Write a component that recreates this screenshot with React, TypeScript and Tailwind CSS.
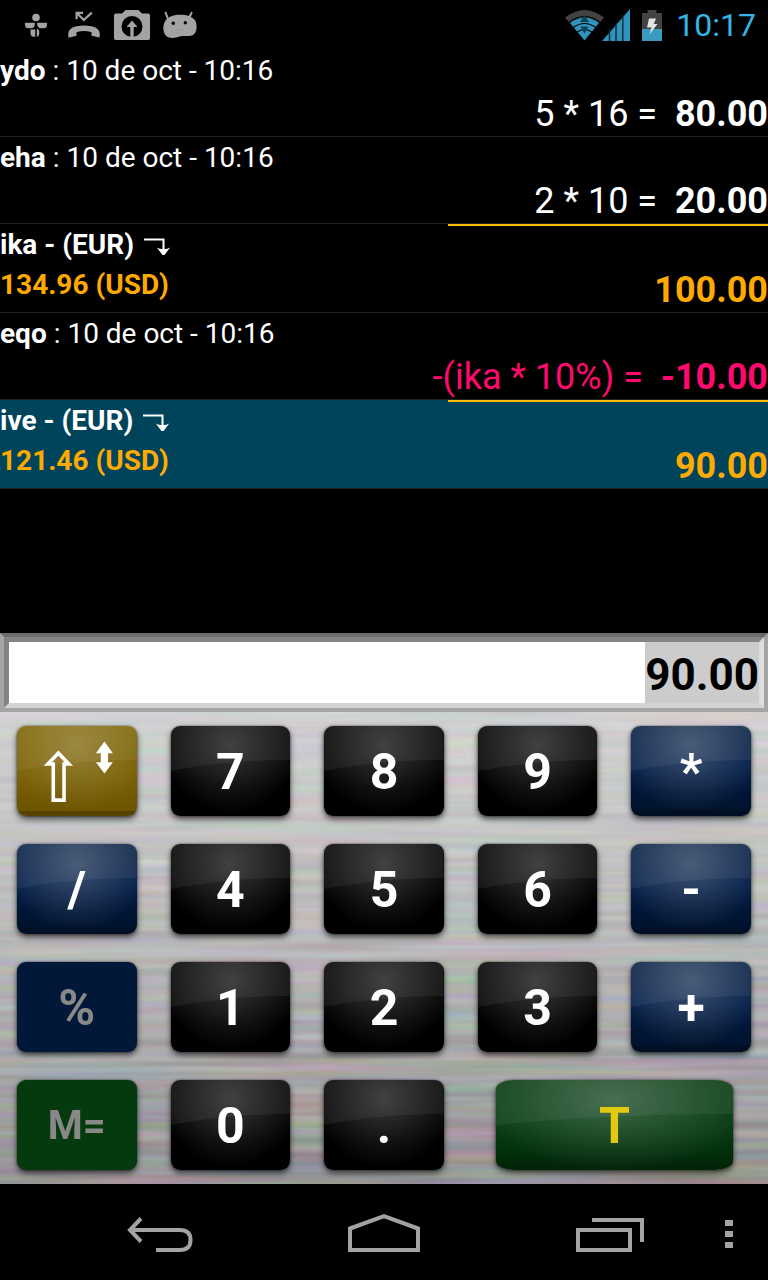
import { ReactNode } from 'react';
import clsx from 'clsx';

type Entry = {
  name: string;
  detail: string;
  expression: string;
  amount: string;
  negative?: boolean;
};

type Total = {
  name: string;
  currency: string;
  converted: string;
  amount: string;
  selected?: boolean;
};

type Tone = 'black' | 'blue' | 'gold' | 'green' | 'blueOff' | 'greenOff';

type KeyDef = {
  label: string;
  tone: Tone;
  text?: string;
  icon?: ReactNode;
  wide?: boolean;
};

const tones: Record<Tone, string> = {
  black:
    'bg-[radial-gradient(ellipse_58%_75%_at_50%_22%,rgba(255,255,255,0.19),transparent),linear-gradient(#080808,#050505_45%,#000_65%)]',
  blue:
    'bg-[radial-gradient(ellipse_60%_75%_at_50%_22%,rgba(255,255,255,0.22),transparent),linear-gradient(#0a2346,#06204a_45%,#001536_75%,#001430_90%,#000f24_95%)]',
  gold:
    'bg-[radial-gradient(ellipse_60%_75%_at_50%_22%,rgba(255,255,255,0.18),transparent),linear-gradient(#806809,#7a6106_55%,#6c5400_94%,#564300_95%)]',
  green:
    'bg-[radial-gradient(ellipse_58%_80%_at_50%_22%,rgba(255,255,255,0.21),transparent),linear-gradient(#093d14,#073c13_50%,#02300c_80%,#022508_95%)]',
  blueOff: 'bg-[#021838]',
  greenOff: 'bg-[#043a0e]',
};

const shiftIcon = (
  <svg viewBox="0 0 120 90" className="relative h-full w-full" aria-hidden="true">
    <path d="M41.5 27 52 38H47.2V74.2H36.4V38H31z" fill="none" stroke="#fff" strokeWidth="3.6" />
    <path d="M87.7 15.5 96.2 27.2H91.3V36.2H96.2L87.7 47.5 79.2 36.2H84.1V27.2H79.2z" fill="#fff" />
  </svg>
);

const keys: KeyDef[] = [
  { label: 'Shift', tone: 'gold', icon: shiftIcon },
  { label: '7', tone: 'black' },
  { label: '8', tone: 'black' },
  { label: '9', tone: 'black' },
  { label: '*', tone: 'blue' },
  { label: '/', tone: 'blue' },
  { label: '4', tone: 'black' },
  { label: '5', tone: 'black' },
  { label: '6', tone: 'black' },
  { label: '-', tone: 'blue' },
  { label: '%', tone: 'blueOff', text: 'text-[50px] text-[#888]' },
  { label: '1', tone: 'black' },
  { label: '2', tone: 'black' },
  { label: '3', tone: 'black' },
  { label: '+', tone: 'blue' },
  { label: 'M=', tone: 'greenOff', text: 'text-[40px] text-[#888]' },
  { label: '0', tone: 'black' },
  { label: '.', tone: 'black' },
  { label: 'T', tone: 'green', text: 'text-[50px] text-[#e2c90f]', wide: true },
];

function StatusBar() {
  return (
    <header className="flex h-[50px] items-center justify-between px-3">
      <div className="flex">
        <svg width="48" height="50" viewBox="0 0 48 50" fill="#a3a3a3" aria-hidden="true">
          <circle cx="24" cy="17.5" r="3.8" />
          <path d="M13 22.8H22.8V24Q22.6 28.3 19 28.3H16.5Q13 28.3 13 24.8zM25.2 22.8H35V24.8Q35 28.3 31.500 28.3H28.700Q25.200 27.800 25.200 24z" />
          <path d="M18.500 29.600H23.200V36.800H21.500Q18.500 36.500 18.500 33zM24.800 28.800Q27.300 29.200 27.300 32.500 27.300 36.500 24.800 36.800z" />
        </svg>
        <svg width="48" height="50" viewBox="0 0 48 50" fill="#a3a3a3" aria-hidden="true">
          <path d="M8.500 37.800C6.500 29 13 25.600 24 25.600S41.500 29 39.500 37.600L31.500 35.800 31.500 32.200Q24 29.800 16.500 32.200V35.800z" />
          <path d="M16.600 19.200V12.800H23M17 13.200 23.800 20 31.800 12.600" fill="none" stroke="#a3a3a3" strokeWidth="2.2" />
        </svg>
        <svg width="48" height="50" viewBox="0 0 48 50" fill="#a3a3a3" aria-hidden="true">
          <path d="M8 13.500H14L17 10.500Q17.600 10 18.500 10H29.500Q30.400 10 31 10.500L34 13.500H40Q42 13.500 42 15.500V38Q42 40 40 40H8Q6 40 6 38V15.500Q6 13.500 8 13.500z" />
          <circle cx="24" cy="26.500" r="10.500" fill="#000" />
          <path d="M24 20.500 29.500 27H25.700V37H22.300V27H18.500z" />
        </svg>
        <svg width="48" height="50" viewBox="0 0 48 50" fill="#a3a3a3" aria-hidden="true">
          <path d="M9.700 12.800 12 19M35.600 12.800 33 18" stroke="#a3a3a3" strokeWidth="2" strokeLinecap="round" />
          <path d="M9.500 20.500C13 16 18 15 24 14.800S36 16 39.500 21C41.500 26 41 32.500 37 35 33 37 29.500 35.500 26 36 22 36.500 19 38.500 14 37.800 7 36.500 5.500 27 9.500 20.500z" />
          <circle cx="17.300" cy="23.300" r="1.700" fill="#000" />
          <circle cx="29.300" cy="22.700" r="1.700" fill="#000" />
          <path d="M21 29.500H22M24.500 30.500H25.500M21.500 33H22.500" stroke="#777" />
        </svg>
      </div>
      <div className="flex items-center">
        <svg width="39" height="31" viewBox="0 0 39 31" aria-hidden="true">
          <path d="M0 7.500Q19.500-7.500 39 7.500L34.500 13Q19.500 1.500 4.500 13z" fill="#424242" />
          <path d="M5 13Q19.500 2 34 13L19.500 30.500z" fill="#2f93bb" />
          <path d="M3.500 12.500Q19.500.500 35.500 12.500M7.500 18Q19.500 9 31.500 18M11.500 22.500Q19.500 16.500 27.500 22.500" fill="none" stroke="#000" strokeWidth="1.100" />
          <path d="M19.500 5 24 12H15zM19.500 23.500 23.500 16.500H15.500z" fill="#124459" />
        </svg>
        <svg className="-ml-0.5" width="28" height="32" viewBox="0 0 28 32" aria-hidden="true">
          <path d="M28 0V32H0z" fill="#2f93bb" />
          <path d="M7.500 20V32M14 14V32M20.800 6V32" stroke="#0b2a38" strokeWidth="1.400" />
        </svg>
        <svg className="ml-3" width="20" height="31" viewBox="0 0 20 31" aria-hidden="true">
          <path d="M5.500 0H14.500V3H20V19H0V3H5.500z" fill="#424242" />
          <path d="M0 19H20V31H0z" fill="#3a9abf" />
          <path d="M7 8.500H14L11.800 14H15.500L7.500 24.500 9.500 17.500H5z" fill="#e4e4e4" />
        </svg>
        <time className="ml-3.5 text-[32px] leading-[50px] text-[#33b5e5]">10:17</time>
      </div>
    </header>
  );
}

function TurnDownIcon() {
  return (
    <svg className="ml-2.5 inline-block" width="27" height="18" viewBox="0 0 27 18" aria-hidden="true">
      <path d="M0 1.500H19.500V12" fill="none" stroke="#fff" strokeWidth="2" />
      <path d="M12.800 9.500Q16.500 11.500 19.500 11 22.500 11.500 26.200 9.500L20.500 17H18.500z" fill="#fff" />
    </svg>
  );
}

function EntryRow({ name, detail, expression, amount, negative }: Entry) {
  return (
    <li className="border-b border-[#222]">
      <p className="text-[28px] leading-[42px]">
        <b>{name}</b> : {detail}
      </p>
      <p
        className={clsx(
          'text-right text-4xl leading-11 whitespace-pre',
          negative && 'text-[#ff0a6c]',
        )}
      >
        {expression} ={'  '}
        <b>{amount}</b>
      </p>
    </li>
  );
}

function TotalRow({ name, currency, converted, amount, selected }: Total) {
  return (
    <li
      className={clsx(
        'relative flex h-[89px] justify-between border-b border-[#222] font-bold',
        selected && 'bg-[#00445c]',
      )}
    >
      <span className="absolute top-0 right-0 h-0.5 w-5/12 bg-[#ffbf00]" />
      <div className="pt-px text-[28px] leading-10">
        <p>
          {name} - ({currency})
          <TurnDownIcon />
        </p>
        <p className="text-[#ffaa00]">{converted}</p>
      </div>
      <p className="self-end text-4xl leading-11 text-[#ffaa00]">{amount}</p>
    </li>
  );
}

function Display() {
  return (
    <div className="border-4 border-[#a4a4a4] border-t-[#6c6c6c]">
      <div className="flex h-[71px] justify-end border-5 border-t-[#858585] border-r-[#dedede] border-b-[#d2d2d2] border-l-[#878383] bg-white">
        <input
          aria-label="Amount"
          defaultValue="90.00"
          className="field-sizing-content bg-[#ccc] pt-1 text-right text-[44px] font-bold text-black outline-none"
        />
      </div>
    </div>
  );
}

// Brushed steel: a vertical gradient with horizontally stretched noise on top
function BrushedMetal() {
  return (
    <svg className="absolute inset-0 h-full w-full" aria-hidden="true">
      <filter id="brushed" x="0" y="0" width="100%" height="100%" colorInterpolationFilters="sRGB">
        <feTurbulence type="fractalNoise" baseFrequency="0.005 0.11" numOctaves="2" seed="4" />
        <feColorMatrix values="0.7 0.1 0.1 0 0.05  0.1 0.7 0.1 0 0.05  0.1 0.1 0.7 0 0.05  0 0 0 0 1" />
      </filter>
      <rect width="100%" height="100%" filter="url(#brushed)" className="opacity-45 mix-blend-overlay" />
    </svg>
  );
}

function Key({ label, tone, text, icon, wide }: KeyDef) {
  const disabled = tone === 'blueOff' || tone === 'greenOff';
  return (
    <div className={clsx('py-3.5', wide ? 'col-span-2 px-[35px]' : 'px-[17px]')}>
      <button
        type="button"
        aria-label={label}
        disabled={disabled}
        className={clsx(
          'relative block h-[90px] w-full overflow-hidden font-bold',
          'shadow-[0_3px_6px_rgba(0,0,0,0.65),0_0_2px_rgba(0,0,0,0.6)]',
          wide ? 'rounded-[18px/9px]' : 'rounded-[9px]',
          tones[tone],
          text ?? 'text-[50px] text-white',
        )}
      >
        {!disabled && (
          <svg
            className="absolute inset-0 h-full w-full"
            viewBox="0 0 120 90"
            preserveAspectRatio="none"
            aria-hidden="true"
          >
            <path d="M0 0H120V34Q55 34 0 45z" fill="#fff" fillOpacity="0.06" />
          </svg>
        )}
        {icon ?? <span className="relative block pt-px leading-[90px]">{label}</span>}
      </button>
    </div>
  );
}

function NavBar() {
  return (
    <nav className="flex h-24 pl-12 [&_svg]:fill-none [&_svg]:stroke-[#a3a3a3]">
      <button type="button" aria-label="Back" className="flex flex-1 items-center justify-center">
        <svg width="68" height="40" viewBox="0 0 68 40" strokeWidth="4">
          <path d="M4 18H54Q64.500 18 64.500 28T54 38H30" />
          <path d="M15 6.500 4 18 15 29.500" />
        </svg>
      </button>
      <button type="button" aria-label="Home" className="flex flex-1 items-center justify-center">
        <svg width="72" height="40" viewBox="0 0 72 40" strokeWidth="4">
          <path d="M2 16.500 36 4.200 70 16.500V38H2z" />
        </svg>
      </button>
      <button type="button" aria-label="Recent apps" className="flex flex-1 items-center justify-center">
        <svg width="72" height="40" viewBox="0 0 72 40" strokeWidth="4">
          <path d="M6 18H58V38H6zM20 8H70V30" />
        </svg>
      </button>
      <button type="button" aria-label="Menu" className="flex w-12 items-center pl-[5px]">
        <svg width="8" height="32" viewBox="0 0 8 32" strokeWidth="8">
          <path d="M4 4V32" strokeDasharray="6 5" />
        </svg>
      </button>
    </nav>
  );
}

export default function App() {
  return (
    <div className="flex min-h-screen flex-col bg-black font-[Roboto,sans-serif] text-white">
      <StatusBar />
      <ul className="flex-1">
        <EntryRow name="ydo" detail="10 de oct - 10:16" expression="5 * 16" amount="80.00" />
        <EntryRow name="eha" detail="10 de oct - 10:16" expression="2 * 10" amount="20.00" />
        <TotalRow name="ika" currency="EUR" converted="134.96 (USD)" amount="100.00" />
        <EntryRow
          name="eqo"
          detail="10 de oct - 10:16"
          expression="-(ika * 10%)"
          amount="-10.00"
          negative
        />
        <TotalRow name="ive" currency="EUR" converted="121.46 (USD)" amount="90.00" selected />
      </ul>
      <Display />
      <main className="relative isolate bg-linear-to-b from-[#d2d2d2] via-[#b8b8b8] to-[#969496]">
        <BrushedMetal />
        <div className="relative grid grid-cols-5">
          {keys.map((key) => (
            <Key key={key.label} {...key} />
          ))}
        </div>
      </main>
      <NavBar />
    </div>
  );
}
